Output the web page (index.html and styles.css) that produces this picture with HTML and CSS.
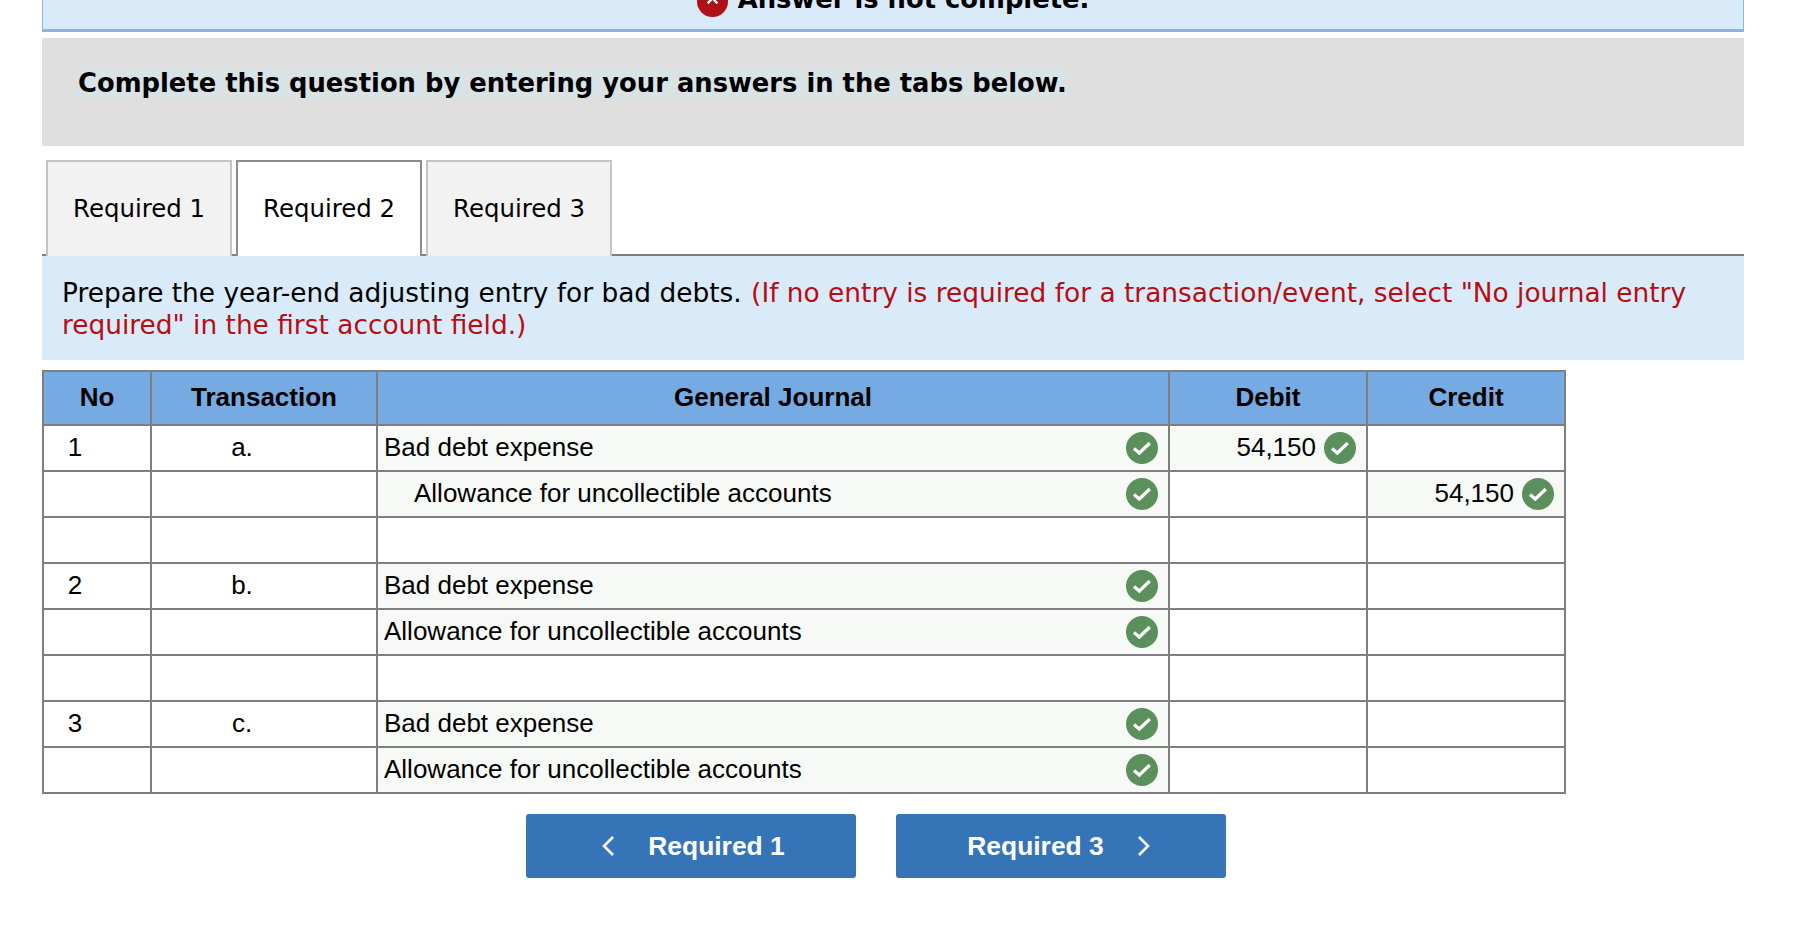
FILE: index.html
```html
<!DOCTYPE html>
<html lang="en">
<head>
  <meta charset="UTF-8" />
  <title>Required 2</title>
  <link rel="stylesheet" href="styles.css">
</head>
<body>
  <div class="status">
    <span class="status-icon">
      <svg viewBox="0 0 32 32" width="31" height="31"><circle cx="16" cy="16" r="16" fill="#b01116"/><path d="M11 7l10 11M21 7L11 18" stroke="#fff" stroke-width="2.5" fill="none"/></svg>
    </span>
    <b>Answer is not complete.</b>
  </div>

  <div class="instruct"><span class="instruct-text">Complete this question by entering your answers in the tabs below.</span></div>

  <div class="tabs">
    <div class="tab">Required 1</div>
    <div class="tab active">Required 2</div>
    <div class="tab">Required 3</div>
  </div>

  <div class="prompt">Prepare the year-end adjusting entry for bad debts. <span class="red">(If no entry is required for a transaction/event, select "No journal entry required" in the first account field.)</span></div>

  <table class="journal">
    <colgroup>
      <col class="c-no"><col class="c-tr"><col class="c-gj"><col class="c-amt"><col class="c-amt">
    </colgroup>
    <thead>
      <tr><th>No</th><th>Transaction</th><th>General Journal</th><th>Debit</th><th>Credit</th></tr>
    </thead>
    <tbody>
      <tr>
        <td class="no">1</td><td class="tr">a.</td>
        <td class="filled"><div class="cell"><span class="txt">Bad debt expense</span><svg class="ok"><use href="#check"/></svg></div></td>
        <td class="filled"><div class="cell amt"><span class="txt">54,150</span><svg class="ok"><use href="#check"/></svg></div></td>
        <td></td>
      </tr>
      <tr>
        <td></td><td></td>
        <td class="filled"><div class="cell indent"><span class="txt">Allowance for uncollectible accounts</span><svg class="ok"><use href="#check"/></svg></div></td>
        <td></td>
        <td class="filled"><div class="cell amt"><span class="txt">54,150</span><svg class="ok"><use href="#check"/></svg></div></td>
      </tr>
      <tr><td></td><td></td><td></td><td></td><td></td></tr>
      <tr>
        <td class="no">2</td><td class="tr">b.</td>
        <td class="filled"><div class="cell"><span class="txt">Bad debt expense</span><svg class="ok"><use href="#check"/></svg></div></td>
        <td></td><td></td>
      </tr>
      <tr>
        <td></td><td></td>
        <td class="filled"><div class="cell"><span class="txt">Allowance for uncollectible accounts</span><svg class="ok"><use href="#check"/></svg></div></td>
        <td></td><td></td>
      </tr>
      <tr><td></td><td></td><td></td><td></td><td></td></tr>
      <tr>
        <td class="no">3</td><td class="tr">c.</td>
        <td class="filled"><div class="cell"><span class="txt">Bad debt expense</span><svg class="ok"><use href="#check"/></svg></div></td>
        <td></td><td></td>
      </tr>
      <tr>
        <td></td><td></td>
        <td class="filled"><div class="cell"><span class="txt">Allowance for uncollectible accounts</span><svg class="ok"><use href="#check"/></svg></div></td>
        <td></td><td></td>
      </tr>
    </tbody>
  </table>

  <div class="nav">
    <button class="nav-btn prev">
      <svg width="14" height="22" viewBox="0 0 14 22"><path d="M12 2L3 11l9 9" stroke="#fff" stroke-width="2.6" fill="none"/></svg>
      Required 1
    </button>
    <button class="nav-btn next">
      Required 3
      <svg width="14" height="22" viewBox="0 0 14 22"><path d="M2 2l9 9-9 9" stroke="#fff" stroke-width="2.6" fill="none"/></svg>
    </button>
  </div>

  <svg class="defs" width="0" height="0">
    <symbol id="check" viewBox="0 0 32 32">
      <circle cx="16" cy="16" r="16" fill="#5b8f5b"/>
      <path d="M8 16.5l5.3 4.5 10.5-10" stroke="#fff" stroke-width="3.2" fill="none"/>
    </symbol>
  </svg>
</body>
</html>
```

FILE: styles.css
```css
* { box-sizing: border-box; }
body {
  margin: 0;
  padding: 0 54px 0 42px;
  background: #fff;
  color: #000;
  font-family: "DejaVu Sans", sans-serif;
  font-size: 24.4px;
}

/* Cut-off status bar at the top */
.status {
  height: 32px;
  overflow: hidden;
  display: flex;
  justify-content: center;
  align-items: flex-end;
  gap: 10px;
  padding-bottom: 15px;
  background: #d9ebf9;
  border: 1px solid #8fb4dc;
  border-top: none;
  border-bottom-width: 3px;
  font-size: 25.8px;
  line-height: 30px;
}
.status-icon { display: block; height: 31px; flex: none; margin-bottom: -3px; }

.instruct {
  margin-top: 6px;
  height: 108px;
  padding: 29px 0 0 36px;
  background: #dfdfdf;
  line-height: 32px;
  font-weight: bold;
  font-size: 25.8px;
}
.instruct-text { background: #d9e2e5; }

/* Tabs */
.tabs {
  display: flex;
  gap: 4px;
  height: 96px;
  margin-top: 14px;
  padding-left: 4px;
  border-bottom: 2px solid #7f7f7f;
}
.tab {
  width: 186px;
  height: 96px;
  padding-bottom: 2px;
  display: flex;
  align-items: center;
  justify-content: center;
  background: #f2f2f2;
  border: 2px solid #c4c4c4;
  border-bottom: none;
}
.tab.active {
  background: #fff;
  border: 2px solid #8c8c8c;
  border-bottom: none;
  position: relative;
  z-index: 1;
}

.prompt {
  padding: 21px 20px 17px;
  height: 104px;
  background: #d9ebf9;
  line-height: 32px;
  font-size: 26.4px;
}
.red { color: #b80d14; margin-left: 1px; }

/* Journal table */
.journal {
  margin: 10px 0 0 0;
  width: 1524px;
  table-layout: fixed;
  border-collapse: collapse;
  font-family: "Liberation Sans", sans-serif;
  font-size: 26px;
}
.c-no { width: 108px; }
.c-tr { width: 226px; }
.c-gj { width: 792px; }
.c-amt { width: 198px; }
.journal th, .journal td {
  border: 2px solid #7f7f7f;
  padding: 0;
  height: 46px;
}
.journal th {
  height: 54px;
  padding-bottom: 2px;
  background: #75aae2;
  text-align: center;
  font-weight: bold;
}
.journal td.no { text-align: center; padding: 0 44px 2px 0; }
.journal td.tr { text-align: center; padding: 0 44px 2px 0; }
.journal td.filled { background: #f6f9f6; }

.cell {
  display: flex;
  align-items: center;
  justify-content: space-between;
  padding: 0 10px 0 6px;
}
.cell.indent { padding-left: 36px; }
.cell.amt { justify-content: flex-end; gap: 8px; }
.txt { padding-bottom: 2px; }
.ok { width: 32px; height: 32px; flex: none; }
.defs { position: absolute; }

/* Prev / next buttons */
.nav {
  display: flex;
  gap: 40px;
  margin-top: 20px;
  padding-left: 484px;
}
.nav-btn {
  width: 330px;
  height: 64px;
  padding: 0;
  display: flex;
  align-items: center;
  justify-content: center;
  gap: 33px;
  background: #3574b6;
  color: #fff;
  border: none;
  border-radius: 3px;
  font-family: "Liberation Sans", sans-serif;
  font-size: 26.4px;
  font-weight: bold;
}
.nav-btn.prev { padding-left: 4px; }
.nav-btn.next { padding-right: 4px; }
```
